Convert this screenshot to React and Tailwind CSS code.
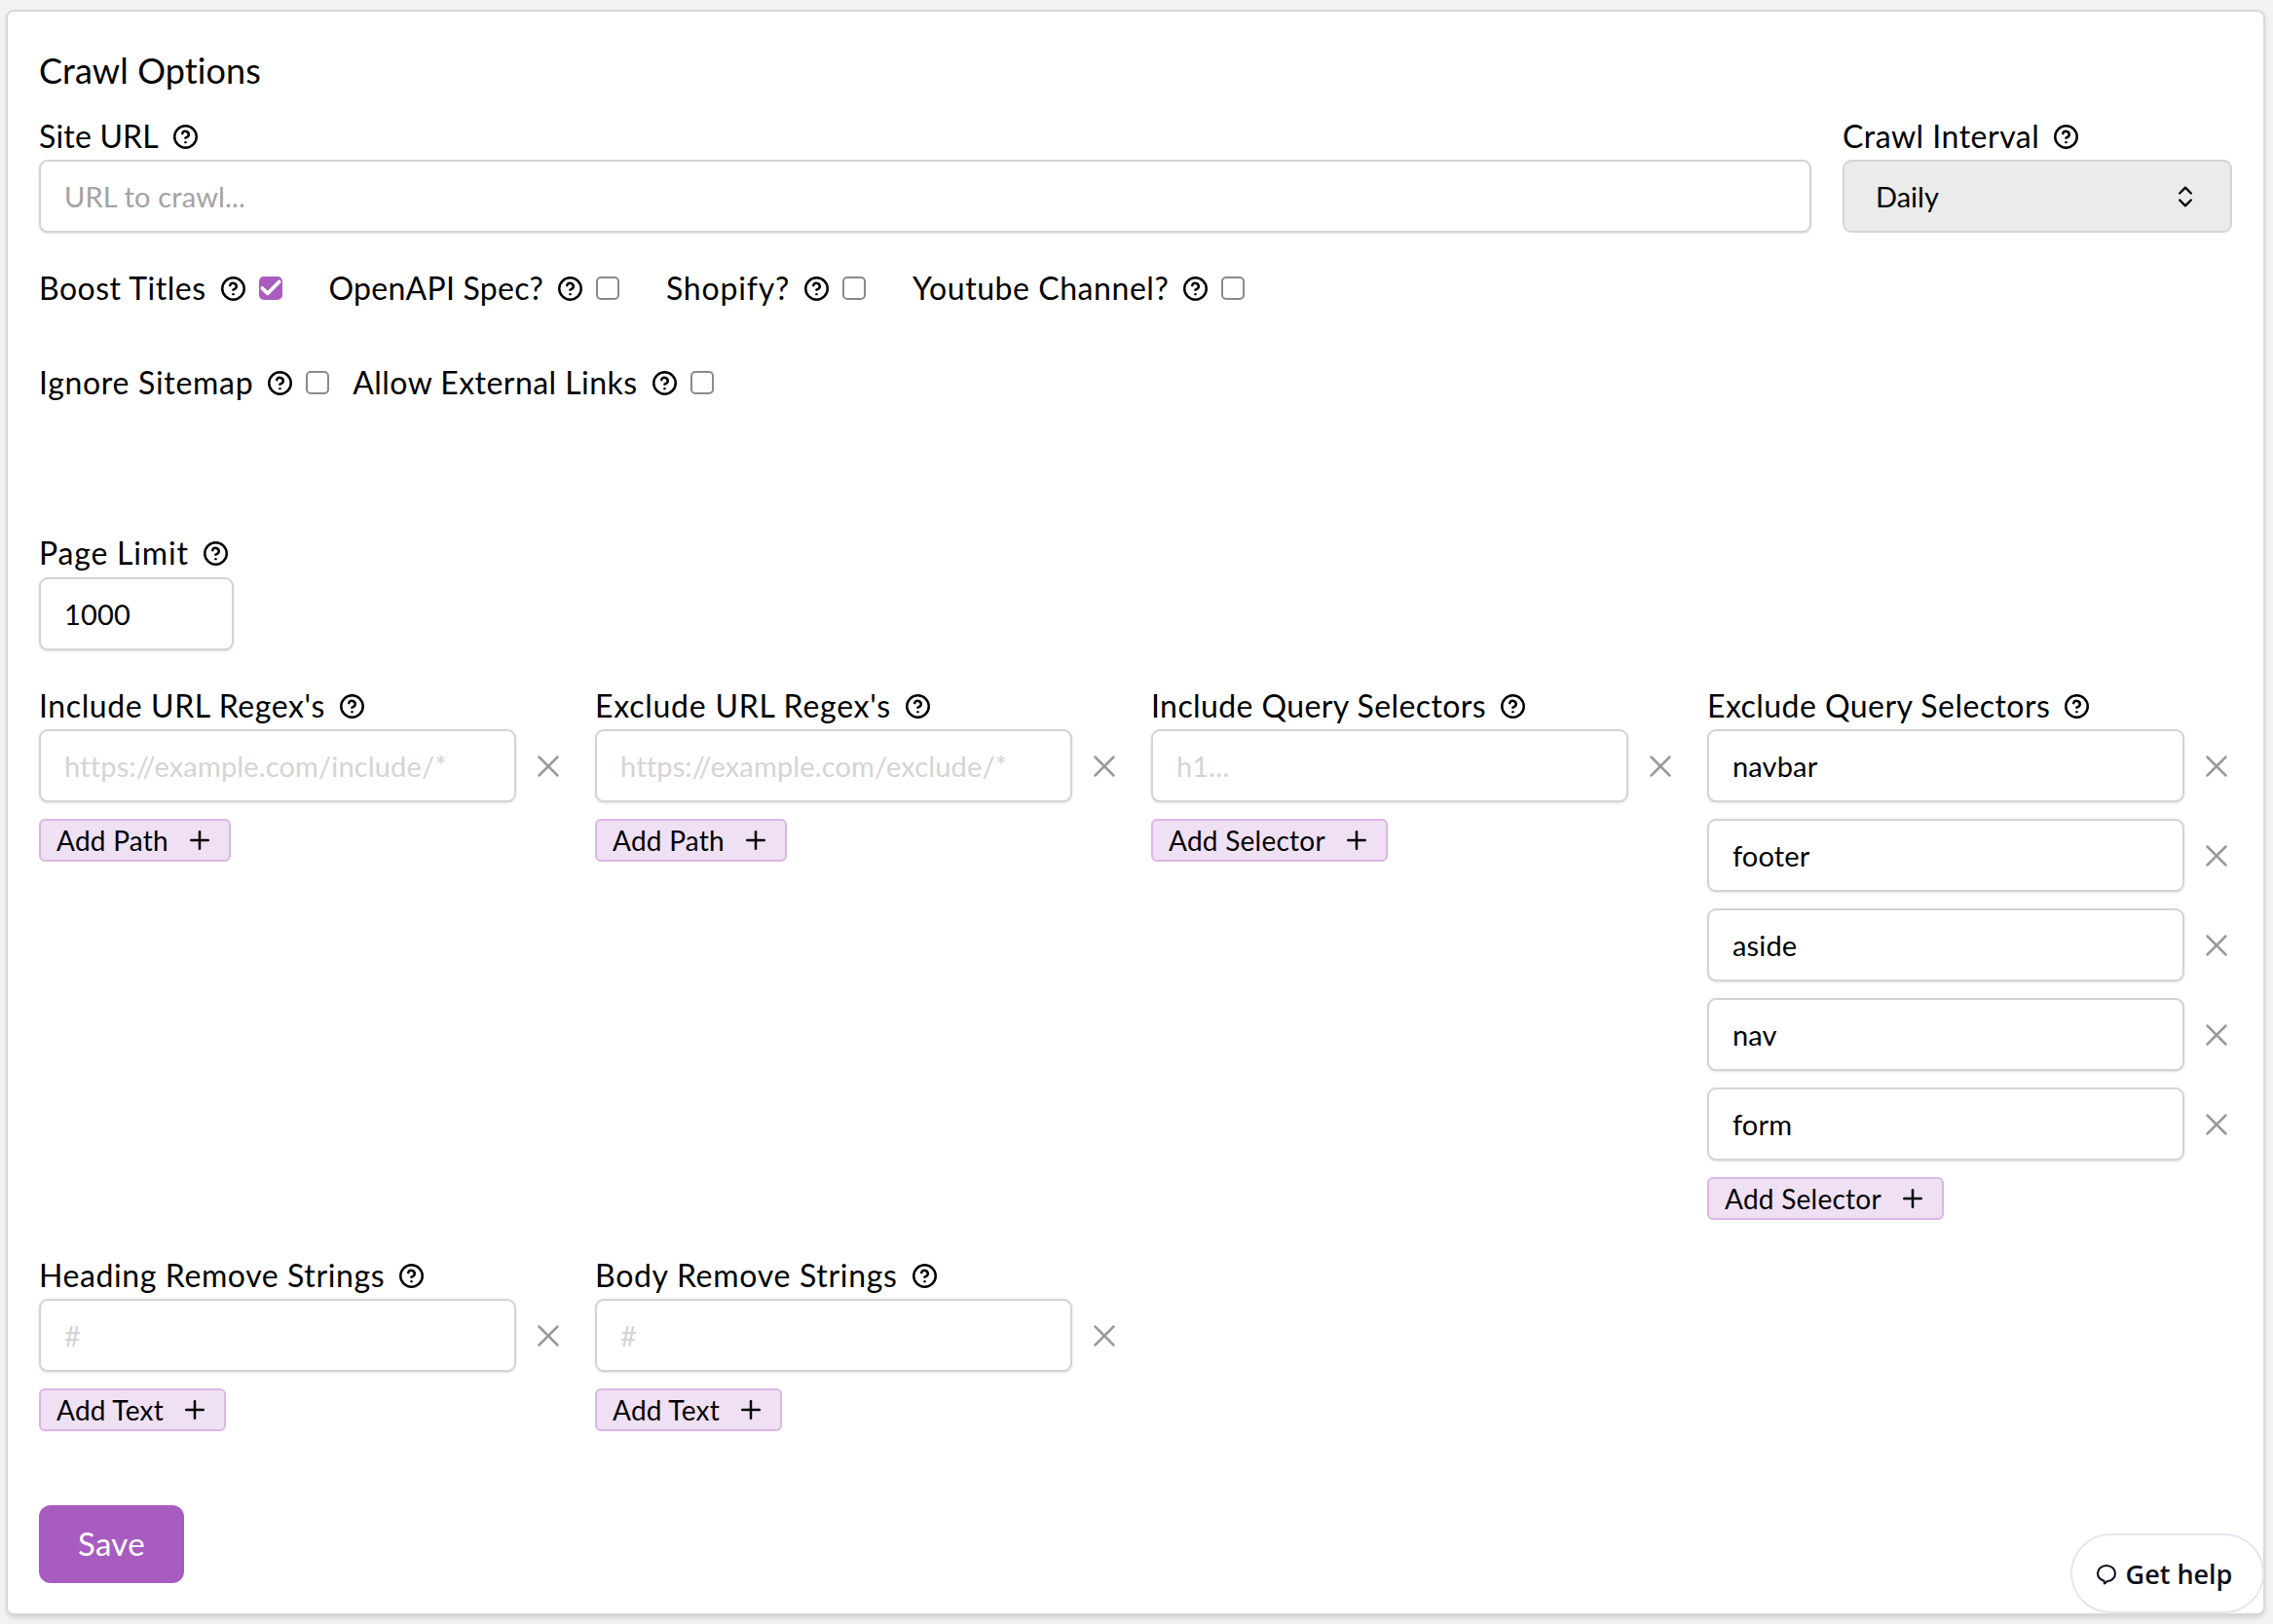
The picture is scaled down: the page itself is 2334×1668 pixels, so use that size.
import React from 'react';
import { Check, ChevronsUpDown, CircleHelp, Plus, X } from 'lucide-react';

const Help = () => (
  <CircleHelp className="w-[27px] h-[27px] shrink-0" strokeWidth={2.2} />
);

// tracking is per label, the fallback font is a little off from the original widths
const Label = ({ children, className = 'tracking-[0.5px]' }) => (
  <div className={`flex items-center gap-[14px] h-8 text-[32px] leading-8 text-black ${className}`}>
    <span>{children}</span>
    <Help />
  </div>
);

const Box = ({ checked = false }) =>
  checked ? (
    <div className="w-[24px] h-[24px] rounded-[5px] bg-[#a95cc0] flex items-center justify-center">
      <Check className="w-[26px] h-[26px] shrink-0 text-white" strokeWidth={3.4} />
    </div>
  ) : (
    <div className="w-[24px] h-[24px] rounded-[5px] border-2 border-[#8a8a8a] bg-white" />
  );

const CheckItem = ({ label, checked, track }) => (
  <div className="flex items-center gap-[13px]">
    <Label className={track}>{label}</Label>
    <Box checked={checked} />
  </div>
);

const inputCls =
  'w-full h-[75px] rounded-[9px] border-2 border-[#d4d4d4] bg-white px-[24px] text-[29px] tracking-[0.15px] text-black shadow-sm outline-none';

const ListField = ({ label, placeholder, values, addText, track }) => (
  <div className="flex flex-col">
    <div className="mb-[8px]">
      <Label className={track}>{label}</Label>
    </div>
    <div className="flex flex-col gap-[17px]">
      {values.map((v, i) => (
        <div key={i} className="flex items-center">
          <input
            readOnly
            value={v}
            placeholder={placeholder}
            className={`${inputCls} !w-[490px] shrink-0 placeholder:text-[#d4d4d4]`}
          />
          <div className="pl-[14px]">
            <X className="w-[38px] h-[38px] text-[#9a9a9a]" strokeWidth={1.6} />
          </div>
        </div>
      ))}
    </div>
    <div className="mt-[17px]">
      <button className="inline-flex items-center gap-[17px] h-[44px] pl-[16px] pr-[15px] rounded-[6px] border-2 border-[#dcb6e6] bg-[#efe0f4] text-[28px] tracking-[0.25px] text-black">
        {addText}
        <Plus className="w-[30px] h-[30px]" strokeWidth={2} />
      </button>
    </div>
  </div>
);

export default function App() {
  return (
    <div className="relative h-[1668px] bg-[#f3f3f3] pl-[6px] pr-[8px] pt-[10px] font-['Lato',sans-serif]">
      <div className="h-[1649px] rounded-[8px] border-2 border-[#d8d8d8] bg-white px-[32px] shadow-md">
        <h2 className="mt-[38px] h-[44px] text-[36px] leading-[44px] tracking-[0.1px] text-black">Crawl Options</h2>

        <div className="mt-[30px] flex gap-[32px]">
          <div className="flex-1 flex flex-col gap-[8px]">
            <Label className="tracking-[0.2px]">Site URL</Label>
            <input readOnly placeholder="URL to crawl..." className={`${inputCls} placeholder:text-[#a3a3a3]`} />
          </div>
          <div className="w-[400px] flex flex-col gap-[8px]">
            <Label>Crawl Interval</Label>
            <div className="h-[75px] rounded-[9px] border-2 border-[#d4d4d4] bg-[#ebebeb] pl-[32px] pr-[32px] flex items-center justify-between text-[29px] text-black">
              Daily
              <ChevronsUpDown className="w-[28px] h-[28px]" strokeWidth={2} />
            </div>
          </div>
        </div>

        <div className="mt-[41px] flex items-center gap-[48px]">
          <CheckItem label="Boost Titles" checked track="tracking-[0.5px]" />
          <CheckItem label="OpenAPI Spec?" track="tracking-[0.25px]" />
          <CheckItem label="Shopify?" track="tracking-[0.8px]" />
          <CheckItem label="Youtube Channel?" track="tracking-[0.55px]" />
        </div>

        <div className="mt-[65px] flex items-center gap-[24px]">
          <CheckItem label="Ignore Sitemap" track="tracking-[0.7px]" />
          <CheckItem label="Allow External Links" track="tracking-[0.45px]" />
        </div>

        <div className="mt-[143px] flex flex-col gap-[9px]">
          <Label className="tracking-[0.8px]">Page Limit</Label>
          <input readOnly value="1000" className={`${inputCls} !w-[200px]`} />
        </div>

        <div className="mt-[41px] grid grid-cols-4 gap-[32px]">
          <ListField label="Include URL Regex's" track="tracking-[0.6px]" placeholder="https://example.com/include/*" values={['']} addText="Add Path" />
          <ListField label="Exclude URL Regex's" track="tracking-[0.75px]" placeholder="https://example.com/exclude/*" values={['']} addText="Add Path" />
          <ListField label="Include Query Selectors" track="tracking-[0.4px]" placeholder="h1..." values={['']} addText="Add Selector" />
          <ListField label="Exclude Query Selectors" track="tracking-[0.45px]" values={['navbar', 'footer', 'aside', 'nav', 'form']} addText="Add Selector" />
        </div>

        <div className="mt-[41px] grid grid-cols-4 gap-[32px]">
          <ListField label="Heading Remove Strings" track="tracking-[0.6px]" placeholder="#" values={['']} addText="Add Text" />
          <ListField label="Body Remove Strings" track="tracking-[0.7px]" placeholder="#" values={['']} addText="Add Text" />
        </div>

        <button className="mt-[76px] w-[149px] h-[80px] rounded-[12px] bg-[#a95cc0] text-[33px] tracking-[0.3px] text-white">Save</button>
      </div>

      <div className="absolute left-[2126px] top-[1575px] w-[199px] h-[82px] rounded-full border-2 border-[#e6e6ee] bg-white flex items-center justify-center gap-[8px] pr-[8px] pt-[2px] font-['Open_Sans',sans-serif] font-semibold text-[27px] text-[#0e1020]">
        <svg viewBox="0 0 24 24" className="w-[24px] h-[24px]" fill="none" stroke="currentColor" strokeWidth="2.1">
          <path d="M12 3c5 0 9 3.400 9 8s-4 8-8 8l-3 2.500-.5-2.800C6 17.600 3 15 3 11c0-4.600 4-8 9-8z" strokeLinejoin="round" />
        </svg>
        Get help
      </div>
    </div>
  );
}
